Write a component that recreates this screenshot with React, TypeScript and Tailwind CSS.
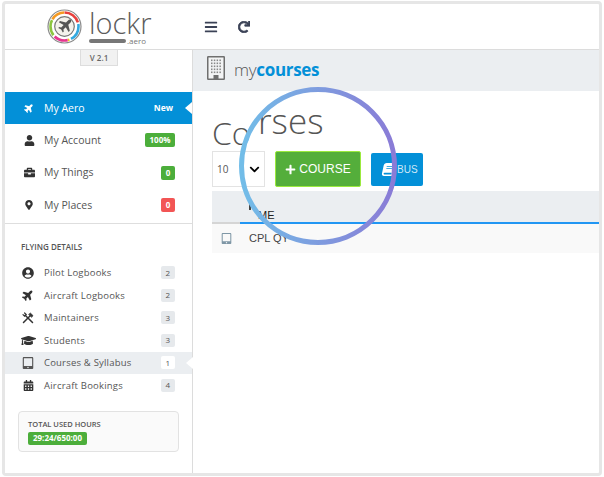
import type { ReactNode } from "react";
import {
  FaBars,
  FaBook,
  FaBriefcase,
  FaCalendarAlt,
  FaChevronDown,
  FaGraduationCap,
  FaMapMarkerAlt,
  FaPlane,
  FaPlus,
  FaRedo,
  FaTabletAlt,
  FaUser,
  FaUserCircle,
} from "react-icons/fa";

const font = { fontFamily: '"Open Sans", sans-serif' };
const arial = { fontFamily: '"Liberation Sans", sans-serif' };

function Logo() {
  const r = 14;
  const c = 2 * Math.PI * r;
  const arcs = [
    ["#e8403c", 0.0, 0.2],
    ["#33a9e0", 0.22, 0.2],
    ["#f0c419", 0.44, 0.02],
    ["#e6358f", 0.46, 0.16],
    ["#8cc63f", 0.64, 0.18],
    ["#f59a23", 0.83, 0.16],
  ] as const;
  return (
    <svg width="35" height="35" viewBox="0 0 35 35" className="shrink-0">
      <circle cx="17.5" cy="17.5" r="16.5" fill="none" stroke="#8a8a8a" strokeWidth="1.2" />
      <g transform="rotate(-90 17.5 17.5)">
        {arcs.map(([color, start, len]) => (
          <circle
            key={color}
            cx="17.5"
            cy="17.5"
            r={r}
            fill="none"
            stroke={color}
            strokeWidth="2.6"
            strokeDasharray={`${len * c} ${c}`}
            strokeDashoffset={-start * c}
          />
        ))}
      </g>
      <circle cx="17.5" cy="17.5" r="9.8" fill="#f4f2ec" stroke="#777" strokeWidth="1.2" />
      <path
        d="M24 11c-1-.8-2.2-.3-3 .5l-2 2-6-1.5-1.2 1.2 4.8 2.8-2.4 2.4-2-.4-1 1 3 1.6 1.6 3 1-1-.4-2 2.4-2.4 2.8 4.8 1.2-1.2-1.5-6 2-2c.8-.8 1.1-1.6.7-2.8z"
        fill="#555"
      />
    </svg>
  );
}

function BuildingIcon() {
  const windows = [];
  for (let row = 0; row < 5; row++) {
    for (let col = 0; col < 4; col++) {
      windows.push(<rect key={`${row}-${col}`} x={4 + col * 2.8} y={3.5 + row * 3} width="1.5" height="1.6" fill="#888" />);
    }
  }
  return (
    <svg width="18" height="24" viewBox="0 0 18 24" className="shrink-0">
      <rect x="0.75" y="0.75" width="16.5" height="22.5" rx="0.5" fill="#f3f4f5" stroke="#6f6f6f" strokeWidth="1.5" />
      {windows}
      <rect x="6.5" y="19" width="5" height="4" fill="#6f6f6f" />
    </svg>
  );
}

function ToolsIcon() {
  return (
    <svg width="12" height="12" viewBox="0 0 12 12" fill="none" stroke="#333" strokeLinecap="round">
      <path d="M3.2 3.2 10.5 10.5" strokeWidth="1.5" />
      <path d="M1 2.6 2.6 4.2 4.2 2.6 2.6 1" strokeWidth="1.2" />
      <path d="M8.2 3.8 1.5 10.5" strokeWidth="1.5" />
      <path d="M6.8 2.2 8.4 1 11 3.6 9.8 5.2z" fill="#333" strokeWidth="0.6" />
    </svg>
  );
}

function SideBadge({ children, active }: { children: ReactNode; active?: boolean }) {
  return (
    <span
      className={`flex h-[13px] w-[14px] items-center justify-center rounded-[2px] text-[8px] text-[#555] ${
        active ? "bg-white" : "bg-[#e6e9ec]"
      }`}
    >
      {children}
    </span>
  );
}

function MainRow({ icon, label, badge }: { icon: ReactNode; label: string; badge: ReactNode }) {
  return (
    <div className="flex h-[32.5px] items-center pr-[17px] text-[10.5px] text-[#555]">
      <span className="flex w-[39px] justify-center pl-[9px] text-[11px] text-[#333]">{icon}</span>
      <span className="flex-1 pt-[1px]">{label}</span>
      {badge}
    </div>
  );
}

function SubRow({
  icon,
  label,
  count,
  active,
}: {
  icon: ReactNode;
  label: string;
  count: number;
  active?: boolean;
}) {
  return (
    <div
      className={`relative flex h-[22.5px] items-center pr-[17px] text-[9.5px] tracking-[0.2px] text-[#555] ${
        active ? "bg-[#ebeef1]" : ""
      }`}
    >
      <span className="flex w-[39px] justify-center pl-[7px] text-[12px] text-[#333]">{icon}</span>
      <span className="flex-1 pt-[1px]">{label}</span>
      <SideBadge active={active}>{count}</SideBadge>
      {active && (
        <span className="absolute right-[-1px] top-[5px] h-0 w-0 border-y-[6px] border-r-[7px] border-y-transparent border-r-white" />
      )}
    </div>
  );
}

function Sidebar() {
  return (
    <aside className="flex w-[188px] shrink-0 flex-col border-r border-[#dcdcdc] bg-white">
      <div className="flex h-[42px] justify-center pl-[1px]">
        <span className="flex h-[16px] w-[38px] items-center justify-center border border-t-0 border-[#ddd] bg-[#f1f1f1] text-[8px] font-semibold text-[#666]">
          V 2.1
        </span>
      </div>
      <div className="relative flex h-[32px] items-center bg-[#0390d8] pr-[17px] text-[10.5px] text-white">
        <span className="flex w-[39px] justify-center pl-[9px] text-[10px]">
          <FaPlane className="-rotate-45" />
        </span>
        <span className="flex-1 pt-[1px]">My Aero</span>
        <span className="pr-[2px] text-[8.5px] font-bold">New</span>
        <span className="absolute right-0 top-[10px] h-0 w-0 border-y-[6px] border-r-[7px] border-y-transparent border-r-white" />
      </div>
      <MainRow
        icon={<FaUser />}
        label="My Account"
        badge={
          <span className="flex h-[14px] w-[30px] items-center justify-center rounded-[2px] bg-[#4cae3b] text-[8px] font-bold text-white">
            100%
          </span>
        }
      />
      <MainRow
        icon={<FaBriefcase />}
        label="My Things"
        badge={
          <span className="flex h-[14px] w-[14px] items-center justify-center rounded-[2px] bg-[#4cae3b] text-[8px] font-bold text-white">
            0
          </span>
        }
      />
      <MainRow
        icon={<FaMapMarkerAlt className="text-[10px]" />}
        label="My Places"
        badge={
          <span className="flex h-[14px] w-[14px] items-center justify-center rounded-[2px] bg-[#f25555] text-[8px] font-bold text-white">
            0
          </span>
        }
      />
      <div className="mt-[1px] border-t border-[#dedede] pl-[16px] pt-[17px] text-[8px] font-semibold leading-[12px] text-[#555]">
        FLYING DETAILS
      </div>
      <div className="mt-[9px] flex flex-col">
        <SubRow icon={<FaUserCircle />} label="Pilot Logbooks" count={2} />
        <SubRow icon={<FaPlane className="-rotate-45" />} label="Aircraft Logbooks" count={2} />
        <SubRow icon={<ToolsIcon />} label="Maintainers" count={3} />
        <SubRow icon={<FaGraduationCap className="text-[15px]" />} label="Students" count={3} />
        <SubRow icon={<FaTabletAlt className="text-[#555]" />} label="Courses &amp; Syllabus" count={1} active />
        <SubRow icon={<FaCalendarAlt className="text-[11px]" />} label="Aircraft Bookings" count={4} />
      </div>
      <div className="ml-[13px] mt-[14px] h-[41px] w-[161px] rounded-[4px] border border-[#e2e2e2] bg-[#fafafa] pl-[9px] pt-[7px]">
        <div className="text-[7.5px] font-semibold leading-[11px] text-[#555]">TOTAL USED HOURS</div>
        <span className="mt-[2px] flex h-[13px] w-[59px] items-center justify-center rounded-[2px] bg-[#4cae3b] text-[8px] font-bold text-white">
          29:24/650:00
        </span>
      </div>
    </aside>
  );
}

function Magnifier() {
  return (
    <>
      <span className="absolute left-[258px] top-[98px] text-[35px] font-light leading-[46px] text-[#555]">rses</span>
      <svg width="160" height="160" viewBox="0 0 160 160" className="absolute left-[238px] top-[86px]">
        <defs>
          <linearGradient id="ring" x1="0" y1="0" x2="1" y2="0">
            <stop offset="0" stopColor="#72bde8" />
            <stop offset="1" stopColor="#8a7bd6" />
          </linearGradient>
        </defs>
        <circle cx="80" cy="80" r="76.5" fill="none" stroke="url(#ring)" strokeWidth="5" />
      </svg>
    </>
  );
}

export default function App() {
  return (
    <div className="relative h-[477px] w-[604px] overflow-hidden bg-white" style={font}>
      <div className="mx-[2px] mb-[1px] mt-[1px] flex h-[475px] w-[600px] flex-col rounded-[4px] border-[3px] border-[#e6e6e6] bg-white">
        <header className="flex h-[46px] shrink-0 items-center border-b border-[#dcdcdc] pl-[42px]">
          <Logo />
          <div className="ml-[7px] flex w-[62px] flex-col">
            <span className="text-[29px] font-light leading-[27px] text-[#5c5c5c]">lockr</span>
            <div className="mt-[2px] flex items-center gap-[1px]">
              <span className="h-[4px] w-[37px] rounded-full bg-[#777]" />
              <span className="text-[8px] leading-[6px] text-[#777]">.aero</span>
            </div>
          </div>
          <FaBars className="ml-[53px] text-[14px] text-[#3b4256]" />
          <FaRedo className="ml-[20px] stroke-current stroke-[30] text-[12px] text-[#3b4256]" />
        </header>
        <div className="flex min-h-0 flex-1">
          <Sidebar />
          <main className="flex min-w-0 flex-1 flex-col">
            <div className="flex h-[41px] shrink-0 items-center bg-[#ebeef1] pb-[5px] pl-[14px]">
              <BuildingIcon />
              <span className="ml-[9px] mt-[4px] text-[17px] font-light tracking-[-0.3px] text-[#555]">
                my<span className="font-bold text-[#0390d8]">courses</span>
              </span>
            </div>
            <h1 className="ml-[19px] mt-[23px] h-[38px] text-[32px] font-light leading-[38px] text-[#555]">Co</h1>
            <div className="ml-[19px] mt-[-1px] flex items-center">
              <div className="flex h-[36px] w-[53px] items-center justify-between border border-[#e3e3e3] pl-[4px] pr-[4px] text-[10px] text-[#555]">
                10
                <FaChevronDown className="text-[11px] text-black" />
              </div>
              <button
                type="button"
                className="ml-[10px] flex h-[36px] w-[86px] items-center justify-center gap-[3px] rounded-[2px] border border-[#9bea3e] bg-[#54ae3b] text-[12px] text-white"
                style={arial}
              >
                <FaPlus className="text-[11px]" />
                COURSE
              </button>
              <button
                type="button"
                className="ml-[10px] flex h-[33px] w-[52px] items-center gap-[2px] rounded-[2px] bg-[#0390d8] pl-[11px] text-[10px] text-[#cfe8f7]"
                style={arial}
              >
                <FaBook className="-skew-x-12 text-[13px] text-white" />
                BUS
              </button>
            </div>
            <div className="relative ml-[19px] mt-[4px] flex h-[31px] items-end bg-[#ebeef1]">
              <span className="absolute left-[37px] top-[13px] h-[6px] w-[2px] bg-[#444]" />
              <div className="ml-[46px] text-[11px] leading-[13px] text-[#222]" style={arial}>
                ME
              </div>
            </div>
            <div className="ml-[19px] flex h-[2px]">
              <div className="w-[28px] bg-[#d5d5d5]" />
              <div className="flex-1 bg-[#2196f3]" />
            </div>
            <div className="ml-[19px] flex h-[29px] items-center bg-[#f9f9f9] text-[11px] text-[#444]" style={arial}>
              <FaTabletAlt className="ml-[9px] text-[11px] text-[#7f97a6]" />
              <span className="ml-[17px]">CPL QY</span>
            </div>
          </main>
        </div>
      </div>
      <Magnifier />
    </div>
  );
}
